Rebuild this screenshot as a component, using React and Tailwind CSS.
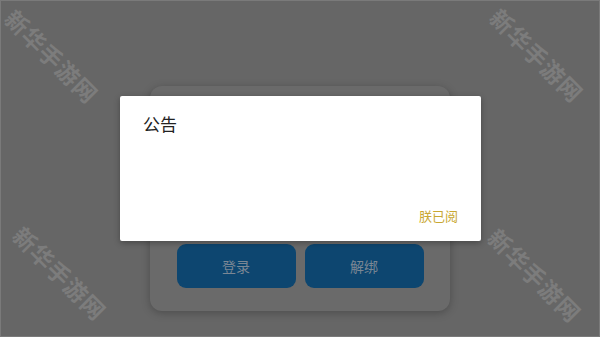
import React from 'react';

const marks = [
  'left-[51px] top-[55px]',
  'left-[536px] top-[54px]',
  'left-[59px] top-[272px]',
  'left-[534px] top-[274px]',
];

export default function App() {
  return (
    <div
      className="relative w-[600px] h-[337px] overflow-hidden bg-[#666666] border border-[#7a7a7a]"
      style={{ fontFamily: '"Noto Sans CJK SC", "Noto Sans", sans-serif' }}
    >
      {/* Login card behind the dialog */}
      <div className="pt-[85px] flex justify-center">
        <div className="w-[300px] h-[225px] rounded-[12px] bg-[#6a6a6a] shadow-[0_2px_8px_rgba(0,0,0,0.25)] flex flex-col justify-end pb-[23px]">
          <div className="flex justify-center gap-[9px]">
            <button className="w-[119px] h-[44px] rounded-[9px] bg-[#0d4670] text-[#7b8794] text-[14px]">
              登录
            </button>
            <button className="w-[119px] h-[44px] rounded-[9px] bg-[#0d4670] text-[#7b8794] text-[14px]">
              解绑
            </button>
          </div>
        </div>
      </div>

      {/* Notice dialog */}
      <div className="absolute left-[119px] top-[95px] w-[361px] h-[145px] bg-white rounded-[2px] shadow-[0_2px_6px_rgba(0,0,0,0.3)] flex flex-col">
        <div className="pl-[23px] pt-[16px] text-[17px] leading-[24px] text-[#222]">公告</div>
        <div className="mt-auto flex justify-end pr-[23px] pb-[16px]">
          <span className="text-[13px] leading-[18px] text-[#c9a832]">朕已阅</span>
        </div>
      </div>

      {/* Watermarks */}
      {marks.map((pos, i) => (
        <div
          key={i}
          className={`absolute ${pos} -translate-x-1/2 -translate-y-1/2 rotate-45 whitespace-nowrap text-[23px] font-bold tracking-[1px] text-[#7c7c7c] select-none`}
        >
          新华手游网
        </div>
      ))}
    </div>
  );
}
